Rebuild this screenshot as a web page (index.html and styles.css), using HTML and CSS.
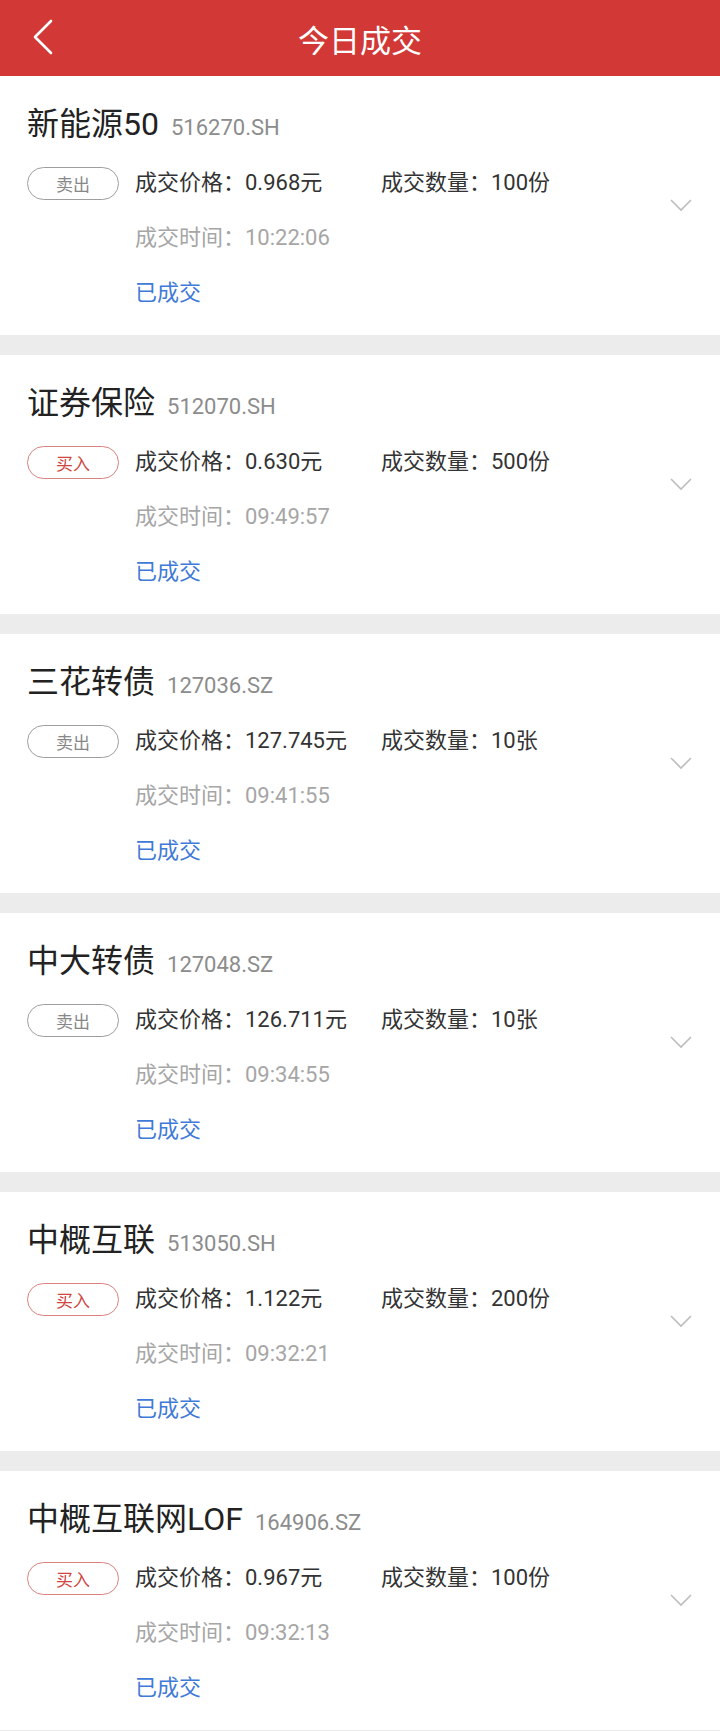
FILE: index.html
```html
<!DOCTYPE html>
<html lang="zh-CN">
<head>
    <meta charset="UTF-8">
    <meta name="viewport" content="width=device-width, initial-scale=1.0">
    <title>今日成交</title>
    <link rel="stylesheet" href="styles.css">
</head>
<body>
    <header class="topbar">
        <svg class="back" width="22" height="36" viewBox="0 0 22 36">
            <path d="M19 2 L3 18 L19 34" fill="none" stroke="#fff" stroke-width="2.6" stroke-linecap="round" stroke-linejoin="round"/>
        </svg>
        <h1>今日成交</h1>
    </header>

    <div class="list">
        <!-- 1 -->
        <div class="trade">
            <div class="main">
                <div class="title"><span class="name">新能源50</span><span class="code">516270.SH</span></div>
                <div class="body">
                    <span class="side sell">卖出</span>
                    <div class="info">
                        <span class="field">成交价格：0.968元</span>
                        <span class="field">成交数量：100份</span>
                        <span class="time">成交时间：10:22:06</span>
                        <span class="status">已成交</span>
                    </div>
                </div>
            </div>
            <svg class="chevron" width="22" height="14" viewBox="0 0 22 14"><path d="M1 1 L11 11 L21 1" fill="none" stroke="#bdbdbd" stroke-width="1.6"/></svg>
        </div>
        <!-- 2 -->
        <div class="trade">
            <div class="main">
                <div class="title"><span class="name">证券保险</span><span class="code">512070.SH</span></div>
                <div class="body">
                    <span class="side buy">买入</span>
                    <div class="info">
                        <span class="field">成交价格：0.630元</span>
                        <span class="field">成交数量：500份</span>
                        <span class="time">成交时间：09:49:57</span>
                        <span class="status">已成交</span>
                    </div>
                </div>
            </div>
            <svg class="chevron" width="22" height="14" viewBox="0 0 22 14"><path d="M1 1 L11 11 L21 1" fill="none" stroke="#bdbdbd" stroke-width="1.6"/></svg>
        </div>
        <!-- 3 -->
        <div class="trade">
            <div class="main">
                <div class="title"><span class="name">三花转债</span><span class="code">127036.SZ</span></div>
                <div class="body">
                    <span class="side sell">卖出</span>
                    <div class="info">
                        <span class="field">成交价格：127.745元</span>
                        <span class="field">成交数量：10张</span>
                        <span class="time">成交时间：09:41:55</span>
                        <span class="status">已成交</span>
                    </div>
                </div>
            </div>
            <svg class="chevron" width="22" height="14" viewBox="0 0 22 14"><path d="M1 1 L11 11 L21 1" fill="none" stroke="#bdbdbd" stroke-width="1.6"/></svg>
        </div>
        <!-- 4 -->
        <div class="trade">
            <div class="main">
                <div class="title"><span class="name">中大转债</span><span class="code">127048.SZ</span></div>
                <div class="body">
                    <span class="side sell">卖出</span>
                    <div class="info">
                        <span class="field">成交价格：126.711元</span>
                        <span class="field">成交数量：10张</span>
                        <span class="time">成交时间：09:34:55</span>
                        <span class="status">已成交</span>
                    </div>
                </div>
            </div>
            <svg class="chevron" width="22" height="14" viewBox="0 0 22 14"><path d="M1 1 L11 11 L21 1" fill="none" stroke="#bdbdbd" stroke-width="1.6"/></svg>
        </div>
        <!-- 5 -->
        <div class="trade">
            <div class="main">
                <div class="title"><span class="name">中概互联</span><span class="code">513050.SH</span></div>
                <div class="body">
                    <span class="side buy">买入</span>
                    <div class="info">
                        <span class="field">成交价格：1.122元</span>
                        <span class="field">成交数量：200份</span>
                        <span class="time">成交时间：09:32:21</span>
                        <span class="status">已成交</span>
                    </div>
                </div>
            </div>
            <svg class="chevron" width="22" height="14" viewBox="0 0 22 14"><path d="M1 1 L11 11 L21 1" fill="none" stroke="#bdbdbd" stroke-width="1.6"/></svg>
        </div>
        <!-- 6 -->
        <div class="trade">
            <div class="main">
                <div class="title"><span class="name">中概互联网LOF</span><span class="code">164906.SZ</span></div>
                <div class="body">
                    <span class="side buy">买入</span>
                    <div class="info">
                        <span class="field">成交价格：0.967元</span>
                        <span class="field">成交数量：100份</span>
                        <span class="time">成交时间：09:32:13</span>
                        <span class="status">已成交</span>
                    </div>
                </div>
            </div>
            <svg class="chevron" width="22" height="14" viewBox="0 0 22 14"><path d="M1 1 L11 11 L21 1" fill="none" stroke="#bdbdbd" stroke-width="1.6"/></svg>
        </div>
    </div>
</body>
</html>
```

FILE: styles.css
```css
body {
    margin: 0;
    background: #ececec;
    font-family: Roboto, "Noto Sans CJK SC", sans-serif;
    color: #333;
}

.topbar {
    height: 76px;
    background: #d13836;
    display: flex;
    align-items: center;
    justify-content: center;
    position: relative;
}

.topbar h1 {
    margin: 0;
    color: #fff;
    font-size: 31px;
    font-weight: normal;
}

.back {
    position: absolute;
    left: 32px;
    top: 19px;
}

.list {
    display: flex;
    flex-direction: column;
    gap: 20px;
}

.trade {
    background: #fff;
    height: 259px;
    box-sizing: border-box;
    padding: 28px 28px 0 27px;
    display: flex;
    align-items: flex-start;
}

.main {
    flex: 1;
}

.chevron {
    align-self: center;
    margin-top: -28px;
}

.title {
    display: flex;
    align-items: baseline;
    height: 40px;
    line-height: 40px;
}

.name {
    font-size: 32px;
    color: #222;
}

.code {
    font-size: 22px;
    color: #8c8c8c;
    margin-left: 12px;
}

.body {
    display: flex;
    align-items: flex-start;
    margin-top: 24px;
}

.side {
    width: 92px;
    height: 33px;
    box-sizing: border-box;
    border-radius: 17px;
    border: 1px solid #9e9e9e;
    color: #888;
    font-size: 17px;
    display: flex;
    align-items: center;
    justify-content: center;
    margin-top: -1px;
}

.side.buy {
    border-color: #d9827e;
    color: #d0453f;
}

.info {
    margin-left: 16px;
    display: grid;
    grid-template-columns: 246px auto;
    row-gap: 25px;
    font-size: 22px;
    line-height: 30px;
}

.time {
    grid-column: 1 / 3;
    color: #a6a6a6;
}

.status {
    grid-column: 1 / 3;
    color: #3f7ad8;
}
```
